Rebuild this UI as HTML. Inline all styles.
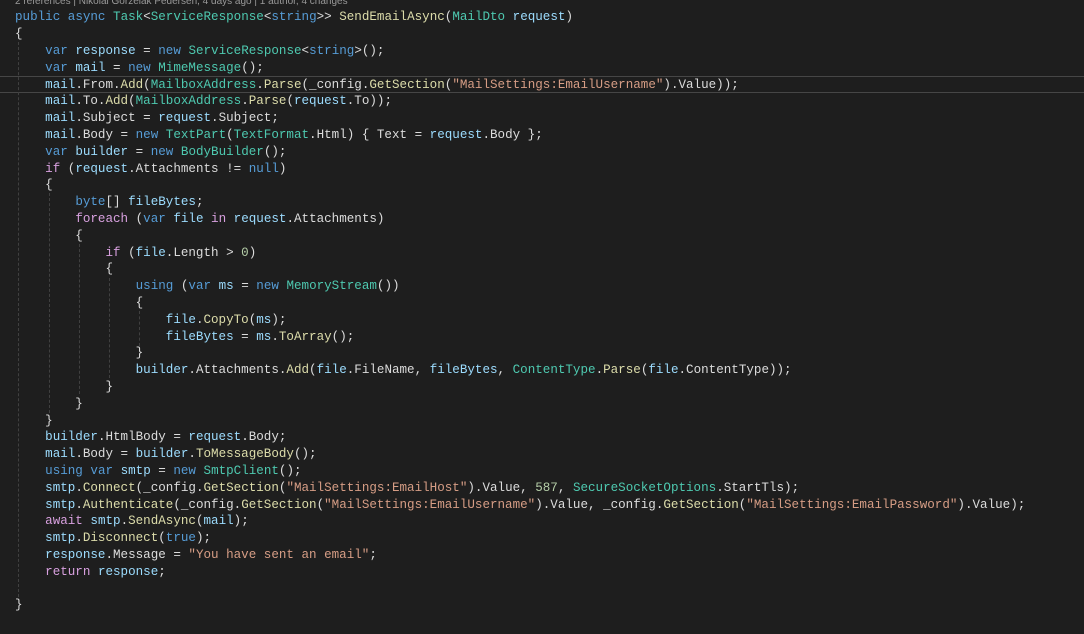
<!DOCTYPE html>
<html><head><meta charset="utf-8"><style>
html,body{margin:0;padding:0;background:#1e1e1e;width:1084px;height:634px;overflow:hidden;position:relative}
.hdr{position:absolute;left:15px;top:-4px;font:10px "Liberation Sans",sans-serif;color:#999;white-space:pre}
.code{position:absolute;left:15px;top:9.4px;font-family:"Liberation Mono",monospace;font-size:12.57px;line-height:16.8px;color:#dcdcdc;white-space:pre}
.k{color:#569cd6}.c{color:#d8a0df}.t{color:#4ec9b0}.m{color:#dcdcaa}.v{color:#9cdcfe}.s{color:#d69d85}.n{color:#b5cea8}
.hl{position:absolute;left:0;top:76px;width:1084px;height:17px;border-top:1px solid #464646;border-bottom:1px solid #464646;box-sizing:border-box}
.g{position:absolute;width:0;border-left:1px dashed #404040}
</style></head><body>
<div class="hdr">2 references | Nikolai Gorzelak Pedersen, 4 days ago | 1 author, 4 changes</div>
<div class="hl"></div>
<div class="g" style="left:18px;top:42px;height:555px"></div>
<div class="g" style="left:49px;top:193px;height:220px"></div>
<div class="g" style="left:79px;top:244px;height:150px"></div>
<div class="g" style="left:109px;top:278px;height:100px"></div>
<div class="g" style="left:139px;top:311px;height:35px"></div>
<div class="code"><span class="k">public</span> <span class="k">async</span> <span class="t">Task</span>&lt;<span class="t">ServiceResponse</span>&lt;<span class="k">string</span>&gt;&gt; <span class="m">SendEmailAsync</span>(<span class="t">MailDto</span> <span class="v">request</span>)
{
    <span class="k">var</span> <span class="v">response</span> = <span class="k">new</span> <span class="t">ServiceResponse</span>&lt;<span class="k">string</span>&gt;();
    <span class="k">var</span> <span class="v">mail</span> = <span class="k">new</span> <span class="t">MimeMessage</span>();
    <span class="v">mail</span>.From.<span class="m">Add</span>(<span class="t">MailboxAddress</span>.<span class="m">Parse</span>(_config.<span class="m">GetSection</span>(<span class="s">"MailSettings:EmailUsername"</span>).Value));
    <span class="v">mail</span>.To.<span class="m">Add</span>(<span class="t">MailboxAddress</span>.<span class="m">Parse</span>(<span class="v">request</span>.To));
    <span class="v">mail</span>.Subject = <span class="v">request</span>.Subject;
    <span class="v">mail</span>.Body = <span class="k">new</span> <span class="t">TextPart</span>(<span class="t">TextFormat</span>.Html) { Text = <span class="v">request</span>.Body };
    <span class="k">var</span> <span class="v">builder</span> = <span class="k">new</span> <span class="t">BodyBuilder</span>();
    <span class="c">if</span> (<span class="v">request</span>.Attachments != <span class="k">null</span>)
    {
        <span class="k">byte</span>[] <span class="v">fileBytes</span>;
        <span class="c">foreach</span> (<span class="k">var</span> <span class="v">file</span> <span class="c">in</span> <span class="v">request</span>.Attachments)
        {
            <span class="c">if</span> (<span class="v">file</span>.Length &gt; <span class="n">0</span>)
            {
                <span class="k">using</span> (<span class="k">var</span> <span class="v">ms</span> = <span class="k">new</span> <span class="t">MemoryStream</span>())
                {
                    <span class="v">file</span>.<span class="m">CopyTo</span>(<span class="v">ms</span>);
                    <span class="v">fileBytes</span> = <span class="v">ms</span>.<span class="m">ToArray</span>();
                }
                <span class="v">builder</span>.Attachments.<span class="m">Add</span>(<span class="v">file</span>.FileName, <span class="v">fileBytes</span>, <span class="t">ContentType</span>.<span class="m">Parse</span>(<span class="v">file</span>.ContentType));
            }
        }
    }
    <span class="v">builder</span>.HtmlBody = <span class="v">request</span>.Body;
    <span class="v">mail</span>.Body = <span class="v">builder</span>.<span class="m">ToMessageBody</span>();
    <span class="k">using</span> <span class="k">var</span> <span class="v">smtp</span> = <span class="k">new</span> <span class="t">SmtpClient</span>();
    <span class="v">smtp</span>.<span class="m">Connect</span>(_config.<span class="m">GetSection</span>(<span class="s">"MailSettings:EmailHost"</span>).Value, <span class="n">587</span>, <span class="t">SecureSocketOptions</span>.StartTls);
    <span class="v">smtp</span>.<span class="m">Authenticate</span>(_config.<span class="m">GetSection</span>(<span class="s">"MailSettings:EmailUsername"</span>).Value, _config.<span class="m">GetSection</span>(<span class="s">"MailSettings:EmailPassword"</span>).Value);
    <span class="c">await</span> <span class="v">smtp</span>.<span class="m">SendAsync</span>(<span class="v">mail</span>);
    <span class="v">smtp</span>.<span class="m">Disconnect</span>(<span class="k">true</span>);
    <span class="v">response</span>.Message = <span class="s">"You have sent an email"</span>;
    <span class="c">return</span> <span class="v">response</span>;

}</div>
</body></html>
